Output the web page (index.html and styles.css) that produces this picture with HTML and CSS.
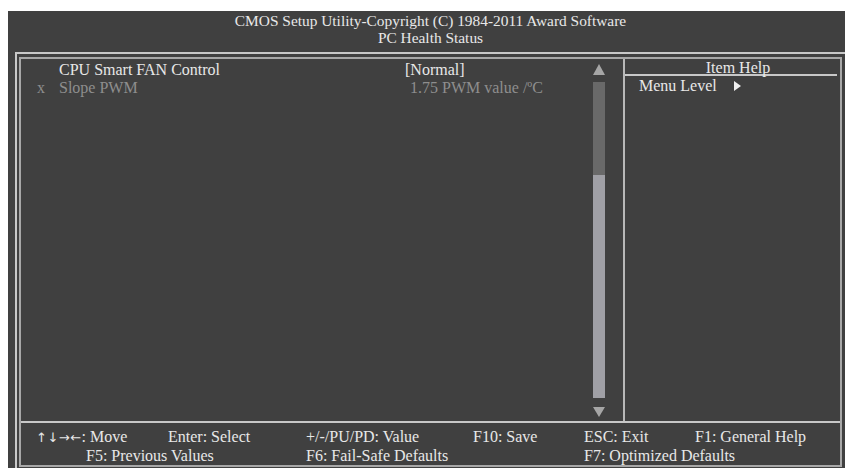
FILE: index.html
```html
<!DOCTYPE html>
<html lang="en">
<head>
  <meta charset="UTF-8" />
  <title>PC Health Status</title>
  <link rel="stylesheet" href="styles.css">
</head>
<body>

  <div class="screen">
    <!-- Title -->
    <div class="title">
      <div>CMOS Setup Utility-Copyright (C) 1984-2011 Award Software</div>
      <div>PC Health Status</div>
    </div>

    <div class="frame">
      <div class="inner">
        <div class="main">
          <div class="items">
            <div class="list">
              <div class="row">
                <span class="mark"></span>
                <span class="label">CPU Smart FAN Control</span>
                <span class="value">[Normal]</span>
              </div>
              <div class="row off">
                <span class="mark">x</span>
                <span class="label">Slope PWM</span>
                <span class="value plain">1.75 PWM value /ºC</span>
              </div>
            </div>
            <div class="scroll">
              <div class="arrow-up"></div>
              <div class="track">
                <div class="track-top"></div>
                <div class="thumb"></div>
              </div>
              <div class="arrow-down"></div>
            </div>
          </div>

          <div class="help">
            <div class="help-head">Item Help</div>
            <div class="help-body">Menu Level <span class="caret"></span></div>
          </div>
        </div>

        <div class="keys">
          <span><span class="arrows">↑↓→←</span>: Move</span>
          <span>Enter: Select</span>
          <span>+/-/PU/PD: Value</span>
          <span>F10: Save</span>
          <span>ESC: Exit</span>
          <span>F1: General Help</span>
          <span class="prev">F5: Previous Values</span>
          <span class="wide">F6: Fail-Safe Defaults</span>
          <span class="wide">F7: Optimized Defaults</span>
        </div>
      </div>
    </div>
  </div>

</body>
</html>
```

FILE: styles.css
```css
* {
  margin: 0;
  padding: 0;
  box-sizing: border-box;
}
html, body {
  overflow: hidden;
  background: #ffffff;
}
.screen {
  margin: 11px 0 0 8px;
  width: 845px;
  height: 470px;
  background: #404040;
  color: #e8e8e8;
  font-family: "Liberation Serif", "DejaVu Serif", serif;
  font-size: 16px;
}
.title {
  height: 41px;
  padding-top: 1px;
  text-align: center;
  font-size: 15.4px;
  line-height: 17px;
}

/* double line frame */
.frame {
  margin-left: 7px;
  width: 832px;
  height: 420px;
  border: 2px solid #c8c8c8;
  padding: 3px 3px 3px 2px;
}
.inner {
  height: 410px;
  border: 2px solid #a8a8a8;
  display: flex;
  flex-direction: column;
}
.main {
  height: 364px;
  display: flex;
  border-bottom: 2px solid #c8c8c8;
}
.items {
  width: 602px;
  display: flex;
}
.list {
  flex: 1;
  padding: 2px 0 0 16px;
}
.row {
  display: flex;
  line-height: 18px;
}
.row.off {
  color: #8e8e8e;
}
.mark {
  width: 22px;
}
.label {
  width: 346px;
}
.value.plain {
  padding-left: 5px;
}

/* scroll bar */
.scroll {
  width: 12px;
  margin-right: 18px;
  padding-top: 5px;
}
.arrow-up {
  width: 0;
  height: 0;
  border-left: 6px solid transparent;
  border-right: 6px solid transparent;
  border-bottom: 11px solid #a6a6a6;
}
.track {
  margin-top: 7px;
  height: 316px;
  display: flex;
  flex-direction: column;
}
.track-top {
  height: 93px;
  background: #696969;
}
.thumb {
  flex: 1;
  background: #a0a0a6;
}
.arrow-down {
  margin-top: 9px;
  width: 0;
  height: 0;
  border-left: 6px solid transparent;
  border-right: 6px solid transparent;
  border-top: 10px solid #a6a6a6;
}

/* help panel */
.help {
  flex: 1;
  border-left: 2px solid #b8b8b8;
}
.help-head {
  height: 17px;
  margin-right: 3px;
  padding-left: 14px;
  text-align: center;
  line-height: 17px;
  border-bottom: 2px solid #c8c8c8;
}
.help-body {
  padding-left: 14px;
  line-height: 18px;
  margin-top: 1px;
}
.caret {
  display: inline-block;
  margin-left: 13px;
  width: 0;
  height: 0;
  border-top: 5px solid transparent;
  border-bottom: 5px solid transparent;
  border-left: 7px solid #f0f0f0;
}

/* key legend */
.keys {
  flex: 1;
  padding: 5px 0 0 15px;
  display: grid;
  grid-template-columns: 132px 138px 167px 111px 111px auto;
  line-height: 18px;
}
.keys .arrows {
  font-family: "DejaVu Sans", sans-serif;
  font-size: 13px;
  letter-spacing: 0.5px;
}
.keys .prev {
  grid-column: 1 / 3;
  padding-left: 50px;
}
.keys .wide {
  grid-column: span 2;
}
.keys .wide + .wide {
  grid-column: 5 / 7;
}
```
